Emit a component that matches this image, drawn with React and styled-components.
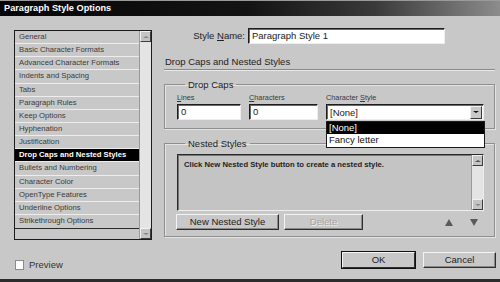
import React from "react";
import styled, { createGlobalStyle, css } from "styled-components";

const Global = createGlobalStyle`
  html, body { margin: 0; padding: 0; background: #c8c8c8; overflow: hidden; }
  * { box-sizing: border-box; }
  body { font-family: "Liberation Sans", Arial, sans-serif; }
`;

const BG = "#c8c8c8";

const Window = styled.div`
  width: 500px;
  height: 282px;
  background: ${BG};
  display: flex;
  flex-direction: column;
  border-bottom: 3px solid #2c2c2c;
  color: #222;
`;

const TitleBar = styled.div`
  height: 16px;
  flex: none;
  border-top: 1px solid #9a9a9a;
  background: linear-gradient(90deg, #050505 0%, #141414 50%, #3a3a3a 75%, #8c8c8c 100%);
  color: #fff;
  font-weight: bold;
  font-size: 9.2px;
  line-height: 15px;
  padding-left: 4px;
`;

const Main = styled.div`
  display: grid;
  grid-template-columns: 138px 331px;
  column-gap: 12px;
  padding: 12px 5px 0 14px;
`;

const ListBox = styled.div`
  margin-top: 2px;
  height: 210px;
  display: grid;
  grid-template-columns: 1fr 12px;
  border: 1px solid #1c1c1c;
  background: ${BG};
`;

const Rows = styled.div`
  display: flex;
  flex-direction: column;
  align-self: start;
  border-bottom: 1px solid #2a2a2a;
`;

const Row = styled.div`
  height: 13.15px;
  border-bottom: 1px solid #ededed;
  font-size: 7.7px;
  line-height: 12px;
  padding-left: 4px;
  white-space: nowrap;
  color: ${(p) => (p.$selected ? "#fff" : "#3a3a3a")};
  background: ${(p) => (p.$selected ? "#000" : BG)};
  font-weight: ${(p) => (p.$selected ? "bold" : "normal")};
  &:last-child { border-bottom: none; }
`;

const ScrollBar = styled.div`
  display: flex;
  flex-direction: column;
  justify-content: space-between;
  background-color: #e4e4e4;
  background-image: radial-gradient(#cfcfcf 0.6px, transparent 0.7px);
  background-size: 2px 2px;
  border-left: 1px solid #9a9a9a;
`;

const ScrollBtn = styled.div`
  height: 11px;
  background: #c4c4c4;
  border: 1px solid;
  border-color: #f2f2f2 #3c3c3c #3c3c3c #f2f2f2;
  display: flex;
  align-items: center;
  justify-content: center;
`;

const Tri = styled.span`
  width: 0;
  height: 0;
  border-left: ${(p) => p.$size || 3}px solid transparent;
  border-right: ${(p) => p.$size || 3}px solid transparent;
  ${(p) =>
    p.$down
      ? css`border-top: ${(p.$h || (p.$size || 3) - 0.5)}px solid ${p.$color || "#555"};`
      : css`border-bottom: ${(p.$h || (p.$size || 3) - 0.5)}px solid ${p.$color || "#555"};`}
`;

const RightCol = styled.div`
  display: flex;
  flex-direction: column;
`;

const NameRow = styled.div`
  display: flex;
  justify-content: flex-end;
  align-items: center;
  gap: 3px;
  padding-right: 50px;
  height: 16px;
`;

const Label = styled.label`
  font-size: ${(p) => (p.$small ? "7.3px" : "9.5px")};
  color: ${(p) => (p.$small ? "#3a3a3a" : "#222")};
  line-height: ${(p) => (p.$small ? "10px" : "12px")};
  white-space: nowrap;
  u { text-decoration: underline; }
`;

const inset = css`
  background: #fff;
  border: 1px solid;
  border-color: #1e1e1e #ededed #ededed #1e1e1e;
  box-shadow: inset 1px 1px 0 #6a6a6a;
`;

const TextBox = styled.div`
  ${inset};
  width: ${(p) => p.$w}px;
  height: 16px;
  font-size: 9.5px;
  line-height: 14px;
  padding-left: 3px;
  white-space: nowrap;
`;

const Heading = styled.div`
  margin-top: 12px;
  height: 14px;
  font-size: 9.5px;
  line-height: 12px;
  padding-left: 1px;
  border-bottom: 1px solid #8a8a8a;
  box-shadow: 0 1px 0 #e8e8e8;
  color: #222;
`;

const Group = styled.fieldset`
  margin: ${(p) => p.$mt}px 0 0 0;
  min-width: 0;
  border: 1px solid #8e8e8e;
  box-shadow: inset 1px 1px 0 #e4e4e4, 1px 1px 0 #e4e4e4;
  padding: 0 10px ${(p) => p.$pb}px 12px;
`;

const Legend = styled.legend`
  font-size: 9.5px;
  line-height: 11px;
  padding: 0 3px;
  margin-left: 8px;
  color: #222;
`;

const FieldGrid = styled.div`
  display: grid;
  grid-template-columns: 64px 69px 158px;
  column-gap: 8px;
  margin-top: 3px;
`;

const Field = styled.div`
  display: flex;
  flex-direction: column;
  gap: 1px;
`;

const SelectWrap = styled.div`
  position: relative;
`;

const Select = styled.div`
  ${inset};
  height: 16px;
  display: flex;
  align-items: center;
  justify-content: space-between;
  font-size: 9.5px;
  padding-left: 3px;
`;

const SelectArrow = styled.div`
  width: 12px;
  height: 13px;
  margin-right: 1px;
  background: #c8c8c8;
  border: 1px solid;
  border-color: #f2f2f2 #3a3a3a #3a3a3a #f2f2f2;
  display: flex;
  align-items: center;
  justify-content: center;
`;

const Menu = styled.div`
  position: absolute;
  top: 100%;
  left: 0;
  width: 159px;
  margin-top: 1px;
  background: #fff;
  border: 1px solid #1a1a1a;
  z-index: 2;
`;

const MenuItem = styled.div`
  height: ${(p) => (p.$active ? 12 : 13)}px;
  font-size: 9.5px;
  line-height: 12px;
  padding-left: 2px;
  background: ${(p) => (p.$active ? "#000" : "#fff")};
  color: ${(p) => (p.$active ? "#fff" : "#111")};
`;

const NestedArea = styled.div`
  margin-top: 5px;
  height: 57px;
  display: grid;
  grid-template-columns: 1fr 12px;
  background: #c4c4c4;
  border: 1px solid;
  border-color: #2a2a2a #eeeeee #eeeeee #2a2a2a;
  box-shadow: inset 1px 1px 0 #777;
`;

const NestedText = styled.div`
  font-size: 7.7px;
  font-weight: bold;
  color: #1e1e1e;
  padding: 5px 0 0 6px;
  white-space: nowrap;
`;

const ButtonRow = styled.div`
  display: flex;
  align-items: center;
  gap: 5px;
  margin-top: 3px;
  margin-left: -1px;
`;

const Button = styled.div`
  width: ${(p) => p.$w}px;
  height: 16px;
  background: #c8c8c8;
  border: 1px solid;
  border-color: #f4f4f4 #2e2e2e #2e2e2e #f4f4f4;
  box-shadow: ${(p) => (p.$default ? "0 0 0 1px #111" : "inset -1px -1px 0 #8a8a8a")};
  font-size: 9.5px;
  line-height: 14px;
  text-align: center;
  color: ${(p) => (p.$disabled ? "#a4a4a4" : "#222")};
  text-shadow: ${(p) => (p.$disabled ? "1px 1px 0 #eeeeee" : "none")};
  white-space: nowrap;
`;

const Arrows = styled.div`
  margin-left: auto;
  margin-right: 6px;
  display: flex;
  gap: 17px;
`;

const Footer = styled.div`
  flex: 1;
  display: flex;
  align-items: flex-start;
  padding: 12px 4px 0 15px;
`;

const Check = styled.div`
  margin-top: 7px;
  display: flex;
  align-items: center;
  gap: 5px;
  font-size: 9.5px;
  color: #333;
`;

const Box = styled.span`
  width: 9px;
  height: 10px;
  background: #fff;
  border: 1px solid #8a8a8a;
`;

const FooterButtons = styled.div`
  margin-left: auto;
  display: flex;
  gap: 8px;
`;

const items = [
  "General",
  "Basic Character Formats",
  "Advanced Character Formats",
  "Indents and Spacing",
  "Tabs",
  "Paragraph Rules",
  "Keep Options",
  "Hyphenation",
  "Justification",
  "Drop Caps and Nested Styles",
  "Bullets and Numbering",
  "Character Color",
  "OpenType Features",
  "Underline Options",
  "Strikethrough Options",
];

export default function App() {
  return (
    <>
      <Global />
      <Window>
        <TitleBar>Paragraph Style Options</TitleBar>
        <Main>
          <ListBox>
            <Rows>
              {items.map((t) => (
                <Row key={t} $selected={t === "Drop Caps and Nested Styles"}>
                  {t}
                </Row>
              ))}
            </Rows>
            <ScrollBar>
              <ScrollBtn><Tri $size={3} $color="#888" /></ScrollBtn>
              <ScrollBtn><Tri $size={3} $down $color="#888" /></ScrollBtn>
            </ScrollBar>
          </ListBox>
          <RightCol>
            <NameRow>
              <Label>Style <u>N</u>ame:</Label>
              <TextBox $w={197}>Paragraph Style 1</TextBox>
            </NameRow>
            <Heading>Drop Caps and Nested Styles</Heading>
            <Group $mt={9} $pb={8}>
              <Legend>Drop Caps</Legend>
              <FieldGrid>
                <Field>
                  <Label $small><u>L</u>ines</Label>
                  <TextBox>0</TextBox>
                </Field>
                <Field>
                  <Label $small><u>C</u>haracters</Label>
                  <TextBox>0</TextBox>
                </Field>
                <Field>
                  <Label $small>Character <u>S</u>tyle</Label>
                  <SelectWrap>
                    <Select>
                      <span>[None]</span>
                      <SelectArrow><Tri $size={3} $down $color="#111" /></SelectArrow>
                    </Select>
                    <Menu>
                      <MenuItem $active>[None]</MenuItem>
                      <MenuItem>Fancy letter</MenuItem>
                    </Menu>
                  </SelectWrap>
                </Field>
              </FieldGrid>
            </Group>
            <Group $mt={9} $pb={6}>
              <Legend>Nested Styles</Legend>
              <NestedArea>
                <NestedText>Click New Nested Style button to create a nested style.</NestedText>
                <ScrollBar>
                  <ScrollBtn><Tri $size={3} $color="#555" /></ScrollBtn>
                  <ScrollBtn><Tri $size={3} $down $color="#888" /></ScrollBtn>
                </ScrollBar>
              </NestedArea>
              <ButtonRow>
                <Button $w={103}>New Nested Style</Button>
                <Button $w={79} $disabled>Delete</Button>
                <Arrows>
                  <Tri $size={4} $h={7} $color="#5a5a5a" />
                  <Tri $size={4} $h={7} $down $color="#5a5a5a" />
                </Arrows>
              </ButtonRow>
            </Group>
          </RightCol>
        </Main>
        <Footer>
          <Check>
            <Box />
            <span>Preview</span>
          </Check>
          <FooterButtons>
            <Button $w={73} $default>OK</Button>
            <Button $w={73}>Cancel</Button>
          </FooterButtons>
        </Footer>
      </Window>
    </>
  );
}
